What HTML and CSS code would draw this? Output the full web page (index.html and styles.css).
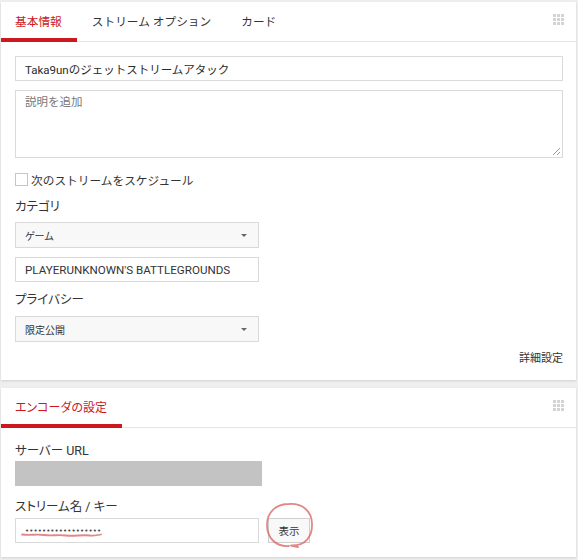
FILE: index.html
```html
<!DOCTYPE html>
<html lang="ja">
<head>
<meta charset="utf-8">
<title>ライブ ストリーミング</title>
<link rel="stylesheet" href="styles.css">
</head>
<body>
<div class="page">
  <section class="card">
    <header class="card-head">
      <nav class="tabs">
        <span class="tab first active">基本情報</span>
        <span class="tab">ストリーム オプション</span>
        <span class="tab">カード</span>
      </nav>
      <span class="grip"><i></i><i></i><i></i><i></i><i></i><i></i><i></i><i></i><i></i></span>
    </header>
    <div class="card-body info-body">
      <div class="field title">Taka9unのジェットストリームアタック</div>
      <div class="field area">
        <span class="placeholder">説明を追加</span>
        <svg class="resize" width="10" height="10" viewBox="0 0 10 10"><path d="M9 2 L2 9 M9 6 L6 9" stroke="#9a9a9a" stroke-width="1" fill="none"/></svg>
      </div>
      <label class="check"><span class="box"></span>次のストリームをスケジュール</label>
      <div class="label cat-label">カテゴリ</div>
      <div class="select">ゲーム</div>
      <div class="field short game">PLAYERUNKNOWN'S BATTLEGROUNDS</div>
      <div class="label priv-label">プライバシー</div>
      <div class="select">限定公開</div>
      <div class="more">詳細設定</div>
    </div>
  </section>
  <section class="card">
    <header class="card-head">
      <nav class="tabs">
        <span class="tab first wide active">エンコーダの設定</span>
      </nav>
      <span class="grip"><i></i><i></i><i></i><i></i><i></i><i></i><i></i><i></i><i></i></span>
    </header>
    <div class="card-body enc-body">
      <div class="label">サーバー URL</div>
      <div class="masked"></div>
      <div class="label key-label">ストリーム名 / キー</div>
      <div class="key-row">
        <div class="field short key"><span class="dots">••••••••••••••••••</span></div>
        <button class="show-btn" type="button">表示</button>
      </div>
    </div>
  </section>
</div>
<svg class="marks" width="578" height="560" viewBox="0 0 578 560">
  <path d="M22 534.5 C30 535.5 36 534 44 535 C52 536 58 534.5 66 535.5 C74 536.5 82 534.5 90 535.5 C95 536 99 535 101 534.5" />
  <path d="M289 546 C276 547 267 538 267 525 C267 512 276 504 289 504 C302 503 312 511 312 524 C312.5 537 305 546 291 545.5 L298 547" />
</svg>
</body>
</html>
```
FILE: styles.css
```css
html, body {
  margin: 0;
  padding: 0;
}

body {
  position: relative;
  width: 578px;
  height: 560px;
  overflow: hidden;
  background: #eeeeee;
  color: #333333;
  font-family: Roboto, "Noto Sans CJK JP", sans-serif;
}

.page {
  display: flex;
  flex-direction: column;
  gap: 8px;
  padding: 2px 2px 0 1px;
}

.card {
  background: #ffffff;
  box-shadow: 0 1px 2px rgba(0, 0, 0, 0.12);
}

.card-head {
  display: flex;
  justify-content: space-between;
  align-items: stretch;
  height: 40px;
  box-sizing: border-box;
  border-bottom: 1px solid #e6e6e6;
}

.tabs {
  display: flex;
  align-items: stretch;
}

.tab {
  display: flex;
  align-items: center;
  padding: 0 15px;
  margin-bottom: -1px;
  border-bottom: 4px solid transparent;
  font-size: 11.7px;
  color: #333333;
  white-space: nowrap;
}

.tab.first {
  padding-left: 14px;
}

.tab.wide {
  font-size: 12px;
  font-feature-settings: "palt";
}

.tab.active {
  color: #cc181e;
  border-bottom-color: #cc181e;
}

.grip {
  align-self: center;
  display: grid;
  grid-template-columns: repeat(3, 3px);
  grid-auto-rows: 3px;
  gap: 1px;
  margin: -4px 12px 0 0;
}

.grip i {
  background: #d4d4d4;
}

.card-body {
  display: flex;
  flex-direction: column;
  align-items: flex-start;
  padding: 14px 13px 12px 14px;
}

.field {
  display: flex;
  align-items: center;
  align-self: stretch;
  height: 25px;
  box-sizing: border-box;
  border: 1px solid #dadada;
  padding: 0 9px;
  font-size: 12px;
  color: #333333;
  background: #ffffff;
}

.field.title {
  font-size: 11.5px;
  color: #2a2a2a;
}

.field.area {
  position: relative;
  height: 68px;
  margin-top: 9px;
  align-items: flex-start;
  padding-top: 2px;
  line-height: 18px;
  font-size: 11.5px;
}

.placeholder {
  color: #7a7a7a;
}

.resize {
  position: absolute;
  right: 1px;
  bottom: 1px;
}

.field.short {
  align-self: flex-start;
  width: 244px;
}

.field.game {
  margin-top: 9px;
  font-size: 11.6px;
}

.check {
  display: flex;
  align-items: center;
  gap: 3px;
  height: 18px;
  margin-top: 12px;
  font-size: 11.7px;
}

.box {
  width: 13px;
  height: 13px;
  box-sizing: border-box;
  border: 1px solid #c6c6c6;
  background: #ffffff;
}

.label {
  height: 18px;
  line-height: 18px;
  font-size: 12.5px;
  font-feature-settings: "palt";
  color: #333333;
}

.cat-label {
  margin: 10px 0 6px;
}

.priv-label {
  margin: 9px 0 7px;
}

.select {
  position: relative;
  display: flex;
  align-items: center;
  width: 244px;
  height: 26px;
  box-sizing: border-box;
  padding: 0 9px;
  border: 1px solid #d9d9d9;
  background: #f8f8f8;
  font-size: 10px;
  font-feature-settings: "palt";
  color: #333333;
}

.select::after {
  content: "";
  position: absolute;
  right: 11px;
  top: 11px;
  border-left: 3px solid transparent;
  border-right: 3px solid transparent;
  border-top: 3px solid #666666;
}

.more {
  align-self: flex-end;
  margin-top: 8px;
  height: 18px;
  line-height: 18px;
  font-size: 11px;
  color: #333333;
}

.enc-body {
  padding: 14px 13px 14px 14px;
}

.masked {
  width: 247px;
  height: 25px;
  margin-top: 1px;
  background: #c3c3c3;
}

.key-label {
  margin: 12px 0 2px;
}

.key-row {
  display: flex;
  gap: 9px;
}

.dots {
  font-family: "DejaVu Sans", sans-serif;
  font-size: 7px;
  letter-spacing: 0.1px;
  color: #444444;
}

.show-btn {
  width: 42px;
  height: 25px;
  box-sizing: border-box;
  padding: 0;
  border: 1px solid #d0d0d0;
  border-radius: 0;
  background: #f8f8f8;
  font-family: "Noto Sans CJK JP", sans-serif;
  font-size: 10.5px;
  color: #333333;
}

.marks {
  position: absolute;
  top: 0;
  left: 0;
  pointer-events: none;
}

.marks path {
  fill: none;
  stroke: rgba(214, 84, 84, 0.7);
  stroke-width: 1.8;
  stroke-linecap: round;
  stroke-linejoin: round;
}
```
